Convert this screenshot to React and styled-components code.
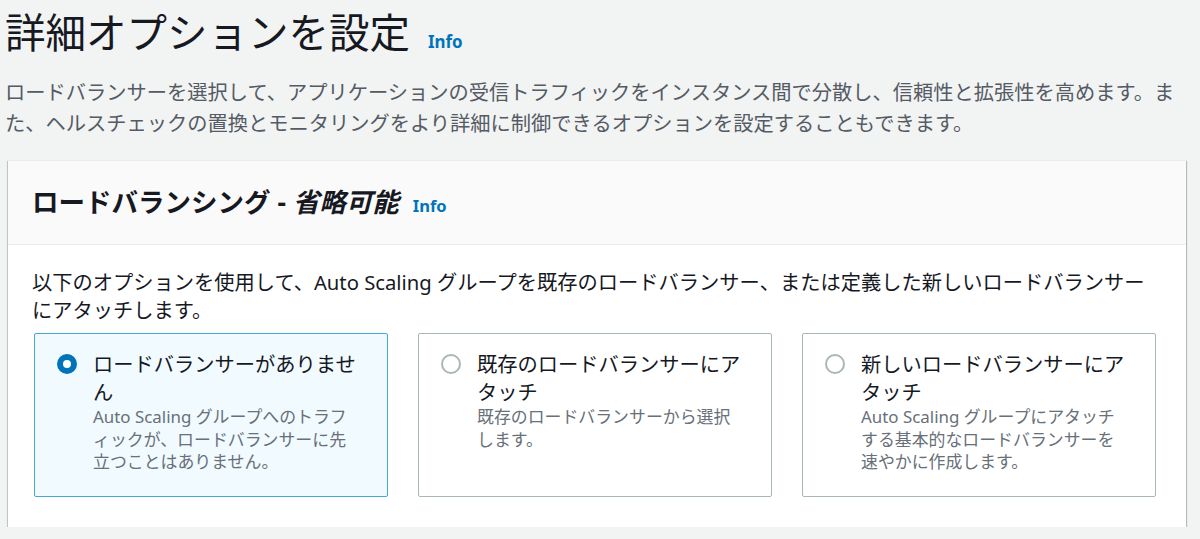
import * as React from 'react';
import styled, { createGlobalStyle } from 'styled-components';

const GlobalStyle = createGlobalStyle`
  html, body {
    margin: 0;
    padding: 0;
    background-color: #f2f3f3;
  }

  body {
    font-family: 'Noto Sans', 'Noto Sans CJK JP', sans-serif;
    color: #16191f;
  }

  * {
    box-sizing: border-box;
  }
`;

const Page = styled.main`
  padding: 9px 14px 0 5px;
`;

const PageHeader = styled.header`
  display: flex;
  align-items: baseline;
  gap: 18px;
`;

const PageTitle = styled.h1`
  margin: 0;

  font-size: 40.5px;
  font-weight: 400;
  line-height: 48px;
  color: #16191f;
`;

const InfoLink = styled.a`
  color: #0073bb;

  font-size: ${(props) => (props.$small ? '16.5px' : '16.9px')};
  font-weight: 700;
  text-decoration: none;
`;

const PageDescription = styled.p`
  margin: 20px 0 0;

  font-size: 20.25px;
  line-height: 31px;
  color: #545b64;
`;

const Card = styled.section`
  margin: 21px 0 0 3px;

  background-color: #ffffff;
  border-top: 1px solid #eaeded;
  box-shadow: 0 1px 1px 0 rgba(0, 28, 36, 0.4), 1px 1px 1px 0 rgba(0, 28, 36, 0.2),
    -1px 1px 1px 0 rgba(0, 28, 36, 0.15);
`;

const CardHeader = styled.div`
  display: flex;
  align-items: baseline;
  gap: 14px;

  padding: 23px 24px 24px;

  background-color: #fafafa;
  border-bottom: 1px solid #eaeded;
`;

const CardTitle = styled.h2`
  margin: 0;

  font-size: 26.5px;
  font-weight: 700;
  line-height: 36px;
  color: #16191f;

  em {
    font-style: italic;
  }
`;

const CardBody = styled.div`
  padding: 23px 24px 30px;
`;

const BodyText = styled.p`
  margin: 0;
  padding-right: 14px;

  font-size: 20.25px;
  line-height: 28px;
  color: #16191f;
`;

const TileGrid = styled.div`
  display: grid;
  grid-template-columns: repeat(3, 1fr);
  gap: 30px;

  margin: 9px 6px 0 2px;
`;

const Tile = styled.label`
  display: flex;
  align-items: flex-start;
  gap: 16px;

  padding: 16px 27px 22px 22px;

  background-color: ${(props) => (props.$selected ? '#f1faff' : '#ffffff')};
  border: 1px solid ${(props) => (props.$selected ? '#44a9d3' : '#aab7b8')};
  border-radius: 2px;

  cursor: pointer;
`;

const Radio = styled.span`
  flex-shrink: 0;

  width: 20px;
  height: 20px;
  margin-top: 4px;

  border-radius: 50%;
  background-color: #ffffff;
  border: ${(props) => (props.$checked ? '6px solid #0073bb' : '2px solid #aab7b8')};
`;

const TileText = styled.div`
  display: flex;
  flex-direction: column;
  min-width: 0;
`;

const TileLabel = styled.span`
  font-size: 20.25px;
  line-height: 28px;
  color: #16191f;
`;

const TileDescription = styled.span`
  font-size: 16.9px;
  line-height: 22.5px;
  color: #687078;
`;

const options = [
  {
    id: 'none',
    label: 'ロードバランサーがありません',
    description: 'Auto Scaling グループへのトラフィックが、ロードバランサーに先立つことはありません。',
  },
  {
    id: 'existing',
    label: '既存のロードバランサーにアタッチ',
    description: '既存のロードバランサーから選択します。',
  },
  {
    id: 'new',
    label: '新しいロードバランサーにアタッチ',
    description: 'Auto Scaling グループにアタッチする基本的なロードバランサーを速やかに作成します。',
  },
];

const App = () => {
  const [selected, setSelected] = React.useState('none');

  return (
    <>
      <GlobalStyle />
      <Page>
        <PageHeader>
          <PageTitle>詳細オプションを設定</PageTitle>
          <InfoLink href="#">Info</InfoLink>
        </PageHeader>
        <PageDescription>
          ロードバランサーを選択して、アプリケーションの受信トラフィックをインスタンス間で分散し、信頼性と拡張性を高めます。また、ヘルスチェックの置換とモニタリングをより詳細に制御できるオプションを設定することもできます。
        </PageDescription>

        <Card>
          <CardHeader>
            <CardTitle>
              ロードバランシング - <em>省略可能</em>
            </CardTitle>
            <InfoLink href="#" $small>
              Info
            </InfoLink>
          </CardHeader>
          <CardBody>
            <BodyText>
              以下のオプションを使用して、Auto Scaling グループを既存のロードバランサー、または定義した新しいロードバランサーにアタッチします。
            </BodyText>
            <TileGrid>
              {options.map((option) => (
                <Tile
                  key={option.id}
                  $selected={selected === option.id}
                  onClick={() => setSelected(option.id)}
                >
                  <Radio $checked={selected === option.id} />
                  <TileText>
                    <TileLabel>{option.label}</TileLabel>
                    <TileDescription>{option.description}</TileDescription>
                  </TileText>
                </Tile>
              ))}
            </TileGrid>
          </CardBody>
        </Card>
      </Page>
    </>
  );
};

export default App;
